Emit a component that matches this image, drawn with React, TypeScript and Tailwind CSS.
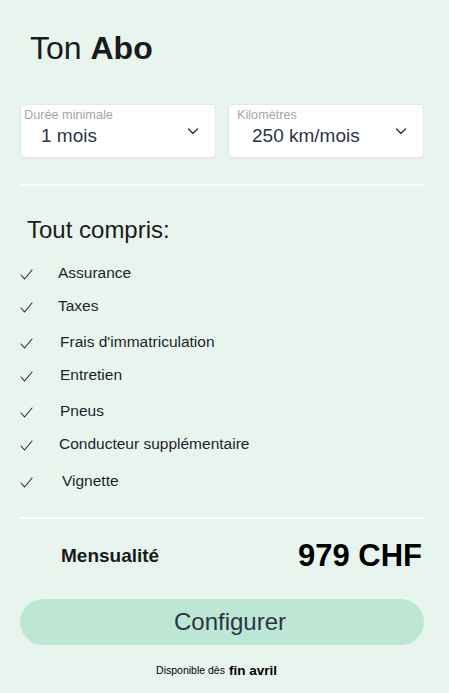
import React from "react";

const items = [
  { label: "Assurance", row: "mt-[17px]", text: "ml-[25px]" },
  { label: "Taxes", row: "mt-[9px]", text: "ml-[25px]" },
  { label: "Frais d'immatriculation", row: "mt-[12px]", text: "ml-[27px]" },
  { label: "Entretien", row: "mt-[9px]", text: "ml-[27px]" },
  { label: "Pneus", row: "mt-[12px]", text: "ml-[27px]" },
  { label: "Conducteur supplémentaire", row: "mt-[9px]", text: "ml-[26px]" },
  { label: "Vignette", row: "mt-[13px]", text: "ml-[29px]" },
];

function Check() {
  return (
    <svg width="13" height="11" viewBox="0 0 13 11" className="mt-[8px] shrink-0">
      <polyline points="1,6 4.5,10 12,1" fill="none" stroke="#2a2a2a" strokeWidth="1.1" strokeLinecap="round" strokeLinejoin="round" />
    </svg>
  );
}

function Chevron() {
  return (
    <svg width="12" height="7" viewBox="0 0 12 7" className="shrink-0">
      <polyline points="1.5,1 6,5.5 10.5,1" fill="none" stroke="#2d3340" strokeWidth="1.4" strokeLinecap="round" strokeLinejoin="round" />
    </svg>
  );
}

function Select({ label, value, labelPad, valuePad }: { label: string; value: string; labelPad: string; valuePad: string }) {
  return (
    <div className="flex-1 h-[54px] bg-white border border-[#e3e6ea] rounded-[4px] shadow-[0_1px_2px_rgba(0,0,0,0.04)] flex justify-between">
      <div className="flex flex-col">
        <div className={`pt-[3px] text-[12.7px] leading-[14px] text-[#a4a4aa] ${labelPad}`}>{label}</div>
        <div className={`mt-[3px] text-[19px] leading-[22px] text-[#2d3446] ${valuePad}`}>{value}</div>
      </div>
      <div className="mt-[23px] mr-[16px]">
        <Chevron />
      </div>
    </div>
  );
}

export default function App() {
  return (
    <div className="w-[449px] h-[693px] bg-[#e8f5ef] pl-5 pr-[25px] flex flex-col" style={{ fontFamily: '"Liberation Sans", Arial, sans-serif' }}>
      <h1 className="pt-[30px] pl-[10px] text-[32px] leading-[36px] text-[#1a1a1a]">
        Ton <span className="font-bold">Abo</span>
      </h1>

      <div className="mt-[38px] flex gap-[12px]">
        <Select label="Durée minimale" value="1 mois" labelPad="pl-[3px]" valuePad="pl-[20px]" />
        <Select label="Kilomètres" value="250 km/mois" labelPad="pl-[8px]" valuePad="pl-[23px]" />
      </div>

      <div className="mt-[26px] h-[2px] bg-white/90" />

      <div className="mt-[30px] pl-[7px] text-[24px] leading-[28px] text-[#1a1a1a]">Tout compris:</div>

      <div className="flex flex-col">
        {items.map((it) => (
          <div key={it.label} className={`flex items-start h-[24px] ${it.row}`}>
            <Check />
            <span className={`text-[15.5px] leading-[24px] text-[#1c1f2a] ${it.text}`}>{it.label}</span>
          </div>
        ))}
      </div>

      <div className="mt-[24px] h-[2px] bg-white/90" />

      <div className="mt-[17px] h-[40px] flex items-center justify-between pl-[41px] pr-[2px]">
        <span className="text-[19px] font-bold text-[#1a1a1a]">Mensualité</span>
        <span className="text-[31px] font-bold text-black">979 CHF</span>
      </div>

      <button className="mt-[23px] h-[46px] w-full rounded-full bg-[#bde6d4] pl-[16px] text-[24px] text-[#2d3446]">
        Configurer
      </button>

      <div className="mt-[18px] h-[16px] flex items-center justify-center gap-[4px] pr-[11px] text-black">
        <span className="text-[10.5px]">Disponible dès</span>
        <span className="text-[13.5px] font-bold">fin avril</span>
      </div>
    </div>
  );
}
